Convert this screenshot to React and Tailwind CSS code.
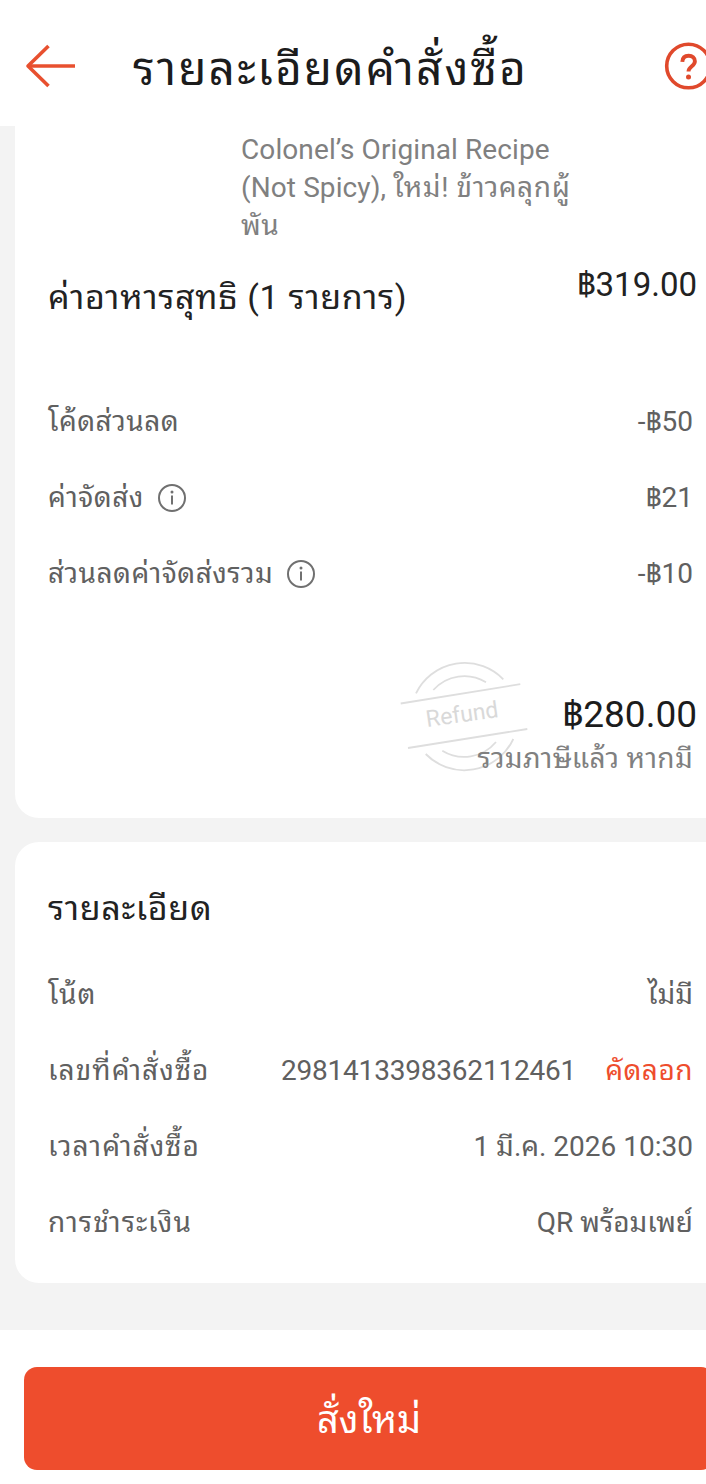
import clsx from 'clsx';

const fees = [
  { label: 'โค้ดส่วนลด', value: '-฿50' },
  { label: 'ค่าจัดส่ง', value: '฿21', info: true },
  { label: 'ส่วนลดค่าจัดส่งรวม', value: '-฿10', info: true },
];

const details = [
  { label: 'โน้ต', value: 'ไม่มี' },
  { label: 'เลขที่คำสั่งซื้อ', value: '2981413398362112461', copy: true },
  { label: 'เวลาคำสั่งซื้อ', value: '1 มี.ค. 2026 10:30' },
  { label: 'การชำระเงิน', value: 'QR พร้อมเพย์' },
];

function BackIcon() {
  return (
    <svg className="w-[50px] h-[44px]" viewBox="0 0 50 44" fill="none" stroke="#e8502f" strokeWidth="3.6">
      <path d="M50 22H3" />
      <path d="M23.5 2L3 22l20.5 20" strokeLinejoin="round" />
    </svg>
  );
}

function HelpIcon() {
  return (
    <svg className="w-12 h-12 shrink-0" viewBox="0 0 48 48" fill="none" stroke="#e0492c" strokeWidth="3.6">
      <circle cx="24.5" cy="24" r="21.8" />
      <path d="M18.3 19.8c.2-4 2.8-6.100 6.400-6.100 3.600 0 6.200 2.200 6.200 5.500 0 5-6.400 5-6.400 10.400" strokeWidth="3.9" />
      <circle cx="24.5" cy="35" r="2.5" fill="#e0492c" stroke="none" />
    </svg>
  );
}

function InfoIcon() {
  return (
    <svg className="w-[30px] h-[30px]" viewBox="0 0 30 30" fill="none" stroke="#707070" strokeWidth="2">
      <circle cx="15" cy="15" r="13" />
      <path d="M15 12.5v9" />
      <circle cx="15" cy="9" r="1.5" fill="#707070" stroke="none" />
    </svg>
  );
}

function RefundStamp() {
  return (
    <svg
      className="absolute left-[380px] top-[530px] w-[140px] h-[120px]"
      viewBox="395 656 140 120"
      fill="none"
      stroke="#dedede"
      strokeWidth="1.8"
    >
      <path d="M416 693.3A54 54 0 0 1 503.3 679.3" />
      <path d="M433.3 690A41.5 41.5 0 0 1 486 682.3" />
      <path d="M400.7 703.5L520.3 684.2" />
      <path d="M408 748L527.3 729" />
      <path d="M425.7 754A54 54 0 0 0 513.3 739" />
      <path d="M442.3 750.7A41.5 41.5 0 0 0 496 742" />
      <text
        x="462"
        y="722"
        textAnchor="middle"
        fontSize="23"
        fill="#d9d9d9"
        stroke="none"
        transform="rotate(-8 462 714)"
      >
        Refund
      </text>
    </svg>
  );
}

function Row({ label, value, info, copy, wide }) {
  return (
    <div className="h-[76px] flex items-center justify-between text-[28px] text-[#606060]">
      <div className="flex items-center gap-[13px]">
        <span className={clsx('pl-px', wide ? 'tracking-[1.1px]' : 'tracking-[0.5px]')}>{label}</span>
        {info && <InfoIcon />}
      </div>
      <div className="flex items-center">
        <span className={clsx(copy && 'mr-[29px] tracking-[-0.2px]')}>{value}</span>
        {copy && <button className="text-[#ee4d2d] tracking-[0.5px]">คัดลอก</button>}
      </div>
    </div>
  );
}

export default function App() {
  return (
    <div className="w-[706px] h-[1484px] overflow-hidden flex flex-col bg-[#f3f3f3] font-[Roboto,'Noto_Sans_Thai_Looped','Noto_Sans_Thai',sans-serif]">
      <header className="h-[126px] shrink-0 flex items-start bg-white pl-[25px]">
        <button className="mt-11">
          <BackIcon />
        </button>
        <h1 className="ml-[58px] mt-[43px] text-[46px] leading-[52px] tracking-[2.1px] text-[#1c1c1c] whitespace-nowrap">รายละเอียดคำสั่งซื้อ</h1>
        <button className="ml-auto mt-[42px] -mr-1.5">
          <HelpIcon />
        </button>
      </header>

      <section className="relative h-[692px] shrink-0 ml-[15px] -mr-4 pl-8 pr-[29px] pt-[5px] bg-white rounded-bl-[24px]">
        <p className="ml-[194px] w-[350px] text-[28px] leading-[38px] tracking-[0.1px] text-[#808080]">
          Colonel’s Original Recipe
          <br />
          (Not Spicy), <span className="tracking-[0.6px]">ใหม่! ข้าวคลุกผู้</span>
          <br />
          <span className="tracking-[0.6px]">พัน</span>
        </p>
        <div className="mt-5 -mr-1 flex items-start justify-between text-[34px] leading-10 text-[#222]">
          <span className="mt-3 pl-px tracking-[0.7px]">ค่าอาหารสุทธิ (1 รายการ)</span>
          <span className="text-[33px]">฿319.00</span>
        </div>
        <div className="mt-[67px]">
          {fees.map((fee) => (
            <Row key={fee.label} {...fee} />
          ))}
        </div>
        <RefundStamp />
        <div className="relative mt-[81px] flex flex-col items-end">
          <span className="-mr-1 text-[37px] leading-[44px] text-[#1c1c1c]">฿280.00</span>
          <span className="mt-[3px] text-[28px] leading-[38px] tracking-[0.3px] text-[#808080]">รวมภาษีแล้ว หากมี</span>
        </div>
      </section>

      <section className="h-[441px] shrink-0 mt-6 ml-[15px] -mr-4 pl-8 pr-[29px] pt-[46px] bg-white rounded-l-[24px]">
        <h2 className="mb-[29px] pl-px text-[34px] leading-10 tracking-[0.7px] text-[#222]">รายละเอียด</h2>
        {details.map((item) => (
          <Row key={item.label} {...item} wide />
        ))}
      </section>

      <footer className="mt-[47px] h-[154px] shrink-0 bg-white pl-6 pt-[37px]">
        <button className="block w-[690px] h-[103px] pt-1 rounded-[13px] bg-[#ee4d2d] text-[38px] text-white">สั่งใหม่</button>
      </footer>
    </div>
  );
}
